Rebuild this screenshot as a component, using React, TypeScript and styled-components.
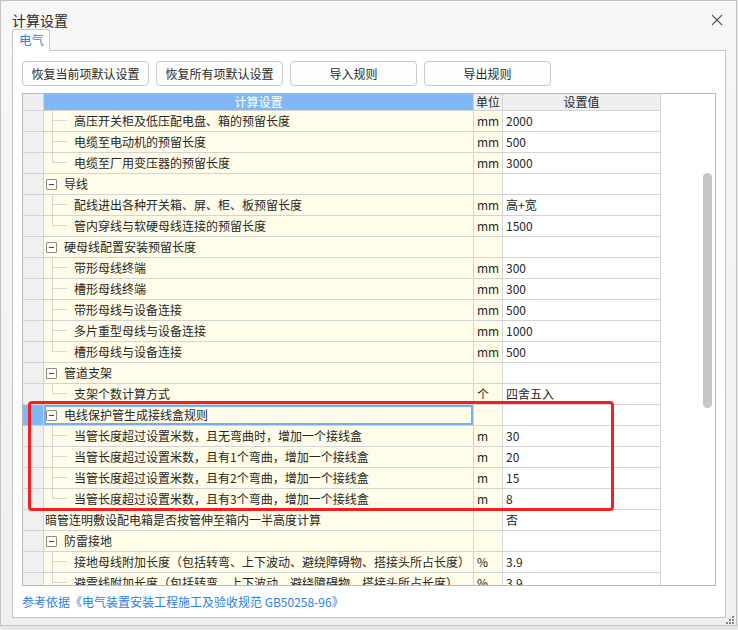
import React from "react";
import styled, { createGlobalStyle, css } from "styled-components";

type Row =
  | { kind: "child"; name: string; unit: string; value: string; last?: boolean }
  | { kind: "group"; name: string; selected?: boolean }
  | { kind: "plain"; name: string; value: string };

const rows: Row[] = [
  { kind: "child", name: "高压开关柜及低压配电盘、箱的预留长度", unit: "mm", value: "2000" },
  { kind: "child", name: "电缆至电动机的预留长度", unit: "mm", value: "500" },
  { kind: "child", name: "电缆至厂用变压器的预留长度", unit: "mm", value: "3000", last: true },
  { kind: "group", name: "导线" },
  { kind: "child", name: "配线进出各种开关箱、屏、柜、板预留长度", unit: "mm", value: "高+宽" },
  { kind: "child", name: "管内穿线与软硬母线连接的预留长度", unit: "mm", value: "1500", last: true },
  { kind: "group", name: "硬母线配置安装预留长度" },
  { kind: "child", name: "带形母线终端", unit: "mm", value: "300" },
  { kind: "child", name: "槽形母线终端", unit: "mm", value: "300" },
  { kind: "child", name: "带形母线与设备连接", unit: "mm", value: "500" },
  { kind: "child", name: "多片重型母线与设备连接", unit: "mm", value: "1000" },
  { kind: "child", name: "槽形母线与设备连接", unit: "mm", value: "500", last: true },
  { kind: "group", name: "管道支架" },
  { kind: "child", name: "支架个数计算方式", unit: "个", value: "四舍五入", last: true },
  { kind: "group", name: "电线保护管生成接线盒规则", selected: true },
  { kind: "child", name: "当管长度超过设置米数，且无弯曲时，增加一个接线盒", unit: "m", value: "30" },
  { kind: "child", name: "当管长度超过设置米数，且有1个弯曲，增加一个接线盒", unit: "m", value: "20" },
  { kind: "child", name: "当管长度超过设置米数，且有2个弯曲，增加一个接线盒", unit: "m", value: "15" },
  { kind: "child", name: "当管长度超过设置米数，且有3个弯曲，增加一个接线盒", unit: "m", value: "8", last: true },
  { kind: "plain", name: "暗管连明敷设配电箱是否按管伸至箱内一半高度计算", value: "否" },
  { kind: "group", name: "防雷接地" },
  { kind: "child", name: "接地母线附加长度（包括转弯、上下波动、避绕障碍物、搭接头所占长度）", unit: "%", value: "3.9" },
  { kind: "child", name: "避雷线附加长度（包括转弯、上下波动、避绕障碍物、搭接头所占长度）", unit: "%", value: "3.9", last: true },
];

const buttons = ["恢复当前项默认设置", "恢复所有项默认设置", "导入规则", "导出规则"];

export default function App() {
  return (
    <>
      <GlobalStyle />
      <Window>
        <TitleBar>
          <Title>计算设置</Title>
          <CloseButton>
            <svg width="12" height="12" viewBox="0 0 12 12">
              <path d="M1 1L11 11M11 1L1 11" stroke="#555" strokeWidth="1.1" fill="none" />
            </svg>
          </CloseButton>
        </TitleBar>
        <TabStrip>
          <Tab>电气</Tab>
        </TabStrip>
        <Panel>
          <Toolbar>
            {buttons.map((b) => (
              <ToolButton key={b}>{b}</ToolButton>
            ))}
          </Toolbar>
          <Grid>
            <Table>
              <Line>
                <HeadCorner />
                <HeadMain>计算设置</HeadMain>
                <HeadCell $w={29}>单位</HeadCell>
                <HeadCell $w={158}>设置值</HeadCell>
              </Line>
              {rows.map((r, i) => (
                <Line key={i}>
                  <RowHead $selected={r.kind === "group" && !!r.selected} />
                  <NameCell $selected={r.kind === "group" && !!r.selected} $pad={r.kind === "child" ? 8 : r.kind === "group" ? 2 : 1}>
                    {r.kind === "child" && <Connector $last={!!r.last} />}
                    {r.kind === "group" && <Toggle />}
                    <NameText>{r.name}</NameText>
                  </NameCell>
                  <UnitCell>{r.kind === "child" ? r.unit : ""}</UnitCell>
                  <ValueCell>{r.kind === "group" ? "" : r.value}</ValueCell>
                </Line>
              ))}
            </Table>
            <ScrollArea>
              <Thumb />
            </ScrollArea>
            <Highlight />
          </Grid>
          <Reference>参考依据《电气装置安装工程施工及验收规范 GB50258-96》</Reference>
        </Panel>
        <Grip>
          <svg width="9" height="9" viewBox="0 0 9 9">
            {[
              [7, 1],
              [4, 4],
              [7, 4],
              [1, 7],
              [4, 7],
              [7, 7],
            ].map(([x, y]) => (
              <rect key={`${x}-${y}`} x={x} y={y} width="2" height="2" fill="#888" />
            ))}
          </svg>
        </Grip>
      </Window>
    </>
  );
}

const GlobalStyle = createGlobalStyle`
  body {
    margin: 0;
    background: #e6e6e6;
    font-family: "Noto Sans CJK SC", "Noto Sans", sans-serif;
  }
`;

const Window = styled.div`
  position: relative;
  box-sizing: border-box;
  width: 737px;
  height: 626px;
  border: 1px solid #c2c2c2;
  background: linear-gradient(#f7f7f7, #efefef);
  display: flex;
  flex-direction: column;
`;

const TitleBar = styled.div`
  height: 28px;
  display: flex;
  align-items: flex-start;
  padding: 9px 13px 0 11px;
  box-sizing: border-box;
`;

const Title = styled.div`
  font-size: 14px;
  line-height: 20px;
  color: #2a2a2a;
`;

const CloseButton = styled.div`
  margin-left: auto;
  margin-top: 4px;
  width: 12px;
  height: 12px;
  display: flex;
`;

const TabStrip = styled.div`
  display: flex;
  padding-left: 11px;
  position: relative;
  z-index: 1;
  margin-bottom: -1px;
`;

const Tab = styled.div`
  box-sizing: border-box;
  width: 38px;
  height: 22px;
  border: 1px solid #c6c6c6;
  border-bottom: 1px solid #fff;
  border-radius: 3px 3px 0 0;
  background: #fff;
  color: #2a84e6;
  font-size: 12.5px;
  line-height: 20px;
  padding-left: 6px;
`;

const Panel = styled.div`
  box-sizing: border-box;
  margin-left: 11px;
  width: 714px;
  height: 568px;
  border: 1px solid #c6c6c6;
  background: #fff;
  padding: 10px 9px 0 9px;
  display: flex;
  flex-direction: column;
`;

const Toolbar = styled.div`
  display: flex;
  gap: 7px;
`;

const ToolButton = styled.button`
  box-sizing: border-box;
  width: 127px;
  height: 25px;
  border: 1px solid #c9c9c9;
  border-radius: 4px;
  background: #fdfdfd;
  font-family: inherit;
  font-size: 12px;
  color: #2a2a2a;
  padding: 0;
`;

const Grid = styled.div`
  position: relative;
  box-sizing: border-box;
  margin-top: 7px;
  width: 694px;
  height: 493px;
  border: 1px solid #b9b9b9;
  display: flex;
  overflow: hidden;
  background: #fff;
`;

const Table = styled.div`
  width: 638px;
  display: flex;
  flex-direction: column;
  flex: none;
`;

const Line = styled.div`
  display: flex;
  flex: none;
`;

const cellBase = css`
  box-sizing: border-box;
  border-right: 1px solid #d3d3d3;
  border-bottom: 1px solid #d3d3d3;
  font-size: 12px;
  color: #262626;
  white-space: nowrap;
  overflow: hidden;
`;

const HeadCorner = styled.div`
  ${cellBase};
  width: 21px;
  height: 17px;
  background: #efefef;
`;

const HeadMain = styled.div`
  ${cellBase};
  width: 430px;
  height: 17px;
  background: #7fb8f4;
  color: #fff;
  text-align: center;
  line-height: 16px;
`;

const HeadCell = styled.div<{ $w: number }>`
  ${cellBase};
  width: ${(p) => p.$w}px;
  height: 17px;
  background: #efefef;
  text-align: center;
  line-height: 16px;
`;

const RowHead = styled.div<{ $selected: boolean }>`
  ${cellBase};
  width: 21px;
  height: 21px;
  background: ${(p) => (p.$selected ? "#7fb8f4" : "#f0f0f0")};
`;

const NameCell = styled.div<{ $selected: boolean; $pad: number }>`
  ${cellBase};
  width: 430px;
  height: 21px;
  background: #fffde9;
  display: flex;
  align-items: stretch;
  padding-left: ${(p) => p.$pad}px;
  ${(p) =>
    p.$selected &&
    css`
      box-shadow: inset 0 0 0 2px #72aef0;
    `}
`;

const Connector = styled.span<{ $last: boolean }>`
  flex: none;
  width: 15px;
  margin-right: 7px;
  background:
    linear-gradient(#d8d8d8, #d8d8d8) 0 0 / 1px ${(p) => (p.$last ? "10px" : "100%")} no-repeat,
    linear-gradient(#d8d8d8, #d8d8d8) 0 9px / 100% 1px no-repeat;
`;

const Toggle = styled.span`
  flex: none;
  position: relative;
  box-sizing: border-box;
  width: 11px;
  height: 11px;
  margin: 5px 7px 0 0;
  border: 1px solid #8a8a8a;
  border-radius: 1px;
  background: #fffef6;
  &::after {
    content: "";
    position: absolute;
    left: 2px;
    top: 4px;
    width: 5px;
    height: 1px;
    background: #444;
  }
`;

const NameText = styled.span`
  line-height: 20px;
`;

const UnitCell = styled.div`
  ${cellBase};
  width: 29px;
  height: 21px;
  background: #fffde9;
  padding-left: 3px;
  line-height: 20px;
`;

const ValueCell = styled.div`
  ${cellBase};
  width: 158px;
  height: 21px;
  background: #fff;
  padding-left: 3px;
  line-height: 20px;
`;

const ScrollArea = styled.div`
  flex: 1;
  display: flex;
  flex-direction: column;
`;

const Thumb = styled.div`
  margin: 79px 0 0 42px;
  width: 9px;
  height: 235px;
  border-radius: 5px;
  background: #c6c6c6;
`;

const Highlight = styled.div`
  position: absolute;
  left: 5px;
  top: 307px;
  width: 586px;
  height: 110px;
  box-sizing: border-box;
  border: 3px solid #f3201f;
  border-radius: 4px;
  pointer-events: none;
`;

const Reference = styled.div`
  margin-top: 8px;
  font-size: 12px;
  line-height: 16px;
  color: #2b80e2;
`;

const Grip = styled.div`
  position: absolute;
  right: 2px;
  bottom: 1px;
  display: flex;
`;
